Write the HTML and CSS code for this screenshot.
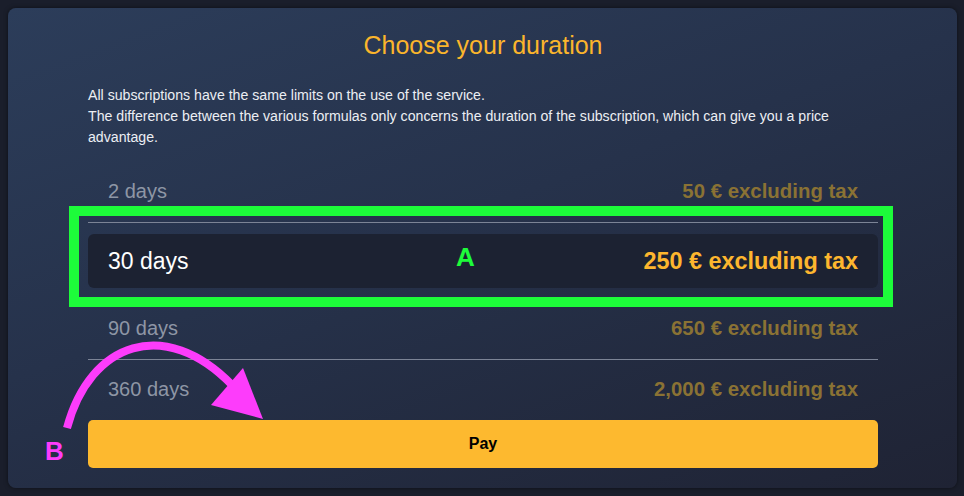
FILE: index.html
```html
<!DOCTYPE html>
<html lang="en">
<head>
<meta charset="utf-8">
<title>Choose your duration</title>
<link rel="stylesheet" href="styles.css">
</head>
<body>
<div class="card">
  <h1 class="title">Choose your duration</h1>
  <p class="intro">All subscriptions have the same limits on the use of the service.<br>The difference between the various formulas only concerns the duration of the subscription, which can give you a price advantage.</p>
  <div class="options">
    <div class="option sep"><span class="days">2 days</span><span class="price">50 € excluding tax</span></div>
    <div class="option selected"><span class="days">30 days</span><span class="price">250 € excluding tax</span></div>
    <div class="option sep"><span class="days">90 days</span><span class="price">650 € excluding tax</span></div>
    <div class="option last"><span class="days">360 days</span><span class="price">2,000 € excluding tax</span></div>
  </div>
  <button class="pay">Pay</button>

  <div class="mark-box"></div>
  <span class="mark mark-a">A</span>
  <span class="mark mark-b">B</span>
  <svg class="arrow" width="964" height="496" viewBox="0 0 964 496">
    <path d="M67 428 C90 342 165 316 232 385" fill="none" stroke="#fd3cfb" stroke-width="8"/>
    <polygon points="243,368 211,405 263,419" fill="#fd3cfb"/>
  </svg>
</div>
</body>
</html>
```
FILE: styles.css
```css
* { box-sizing: border-box; }
html, body { margin: 0; padding: 0; }
body {
  width: 964px;
  height: 496px;
  background: #1a1e2b;
  font-family: "Liberation Sans", Arial, Helvetica, sans-serif;
  overflow: hidden;
  padding: 8px 7px 8px 8px;
}
.card {
  position: relative;
  width: 949px;
  height: 480px;
  border-radius: 8px;
  background: linear-gradient(160deg, #2c3d5a 0%, #26324b 45%, #1f2334 100%);
  box-shadow: 0 0 4px rgba(0,0,0,0.5);
  padding: 22px 79px 0 80px;
}
.title {
  margin: 0;
  font-size: 25px;
  line-height: 30px;
  font-weight: normal;
  color: #fbb52c;
  text-align: center;
}
.intro {
  margin: 25px 0 0;
  font-size: 14.15px;
  line-height: 21px;
  color: #eceef3;
}
.options {
  margin-top: 12px;
  display: flex;
  flex-direction: column;
}
.option {
  display: flex;
  justify-content: space-between;
  align-items: center;
  padding: 0 20px;
  height: 62px;
  font-size: 20px;
}
.option.sep {
  height: 63px;
  border-bottom: 1px solid #7c8496;
}
.option.last { height: 59px; }
.days { color: #8e96a5; }
.price { color: #8a7234; font-weight: bold; font-size: 20.4px; }
.option.selected {
  height: 54px;
  margin: 11px 0 9px;
  background: #1c2232;
  border-radius: 6px;
  font-size: 23px;
}
.selected .days { color: #ffffff; }
.selected .price { color: #fdb62e; font-size: 23.4px; }
.pay {
  display: block;
  width: 100%;
  height: 48px;
  margin-top: 1px;
  border: none;
  border-radius: 5px;
  background: #fdb92f;
  color: #000;
  font-family: inherit;
  font-size: 16px;
  font-weight: bold;
}
.mark-box {
  position: absolute;
  left: 61px;
  top: 198px;
  width: 824px;
  height: 101px;
  border: 10px solid #1dfc3a;
}
.mark {
  position: absolute;
  font-size: 26px;
  line-height: 26px;
  font-weight: bold;
}
.mark-a { left: 448px; top: 236px; color: #1dfc3a; }
.mark-b { left: 37px; top: 430px; color: #fd3cfb; }
.arrow {
  position: absolute;
  left: -8px;
  top: -8px;
  pointer-events: none;
}
```
